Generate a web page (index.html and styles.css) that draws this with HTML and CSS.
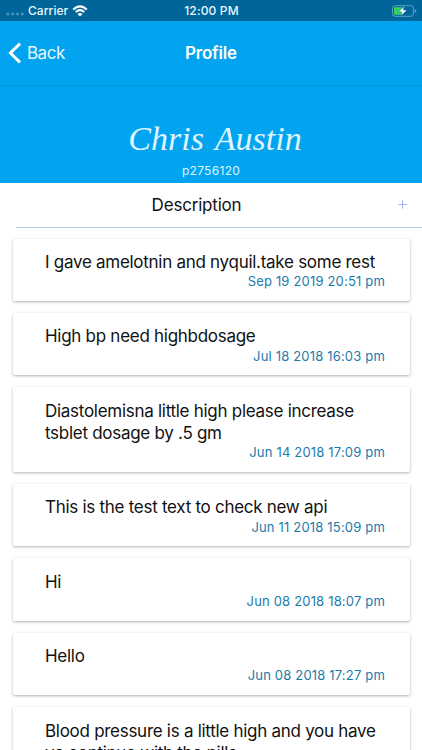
FILE: index.html
```html
<!DOCTYPE html>
<html lang="en">
<head>
  <meta charset="UTF-8">
  <meta name="viewport" content="width=device-width, initial-scale=1.0">
  <title>Profile</title>
  <link rel="stylesheet" href="styles.css">
</head>
<body>
  <!-- Status Bar -->
  <div class="status-bar">
    <div class="carrier">
      <svg class="signal" width="18" height="4" viewBox="0 0 18 4">
        <circle cx="1.9" cy="2" r="1.5"/>
        <circle cx="6.7" cy="2" r="1.5"/>
        <circle cx="11.5" cy="2" r="1.5"/>
        <circle cx="16.3" cy="2" r="1.5"/>
      </svg>
      <span class="carrier-name">Carrier</span>
      <svg class="wifi" width="16" height="12" viewBox="0 0 16 12">
        <path d="M1.2 4.4 Q8 -1.7 14.8 4.4" />
        <path d="M3.7 7.1 Q8 3.2 12.3 7.1" />
        <path class="dot" d="M5.5 8.9 Q8 7 10.5 8.9 L8 11.5 Z" />
      </svg>
    </div>
    <span class="time">12:00 PM</span>
    <svg class="battery" width="26" height="12" viewBox="0 0 26 12">
      <rect class="outline" x="1.5" y="0.7" width="21" height="10.6" rx="2.8"/>
      <path class="outline-cap" d="M23.8 4 Q25.4 4.6 25.4 6 Q25.4 7.4 23.8 8 Z"/>
      <rect class="level" x="3" y="2.2" width="8.2" height="7.6" rx="1"/>
      <path class="bolt" d="M13.4 1 L7.4 6.9 H10.9 L9.8 11 L16 5.1 H12.4 Z"/>
    </svg>
  </div>

  <!-- Navigation Bar -->
  <nav class="navbar">
    <a class="back" href="#">
      <svg width="14" height="22" viewBox="0 0 14 22">
        <path d="M12 1.6 L2.4 11 L12 20.4"/>
      </svg>
      <span>Back</span>
    </a>
    <h1>Profile</h1>
  </nav>

  <!-- Patient -->
  <div class="patient">
    <div class="patient-name">Chris Austin</div>
    <div class="patient-id">p2756120</div>
  </div>

  <!-- Description -->
  <div class="section-header">
    <h2>Description</h2>
    <a class="add" href="#">
      <svg width="9" height="9" viewBox="0 0 9 9"><path d="M4.5 0.3 V8.7 M0.3 4.5 H8.7"/></svg>
    </a>
  </div>

  <div class="notes">
    <div class="card">
      <p>I gave amelotnin and nyquil.take some rest</p>
      <span class="date">Sep 19 2019 20:51 pm</span>
    </div>
    <div class="card">
      <p>High bp need highbdosage</p>
      <span class="date">Jul 18 2018 16:03 pm</span>
    </div>
    <div class="card">
      <p>Diastolemisna little high please increase<br>tsblet dosage by .5 gm</p>
      <span class="date">Jun 14 2018 17:09 pm</span>
    </div>
    <div class="card">
      <p>This is the test text to check new api</p>
      <span class="date">Jun 11 2018 15:09 pm</span>
    </div>
    <div class="card">
      <p>Hi</p>
      <span class="date">Jun 08 2018 18:07 pm</span>
    </div>
    <div class="card">
      <p>Hello</p>
      <span class="date">Jun 08 2018 17:27 pm</span>
    </div>
    <div class="card">
      <p>Blood pressure is a little high and you have<br>yo continue with the pills</p>
    </div>
  </div>
</body>
</html>
```
FILE: styles.css
```css
/* General styling */
* {
  box-sizing: border-box;
}

body {
  font-family: Inter, 'Liberation Sans', sans-serif;
  background-color: #fff;
  color: #111;
  margin: 0;
  height: 750px;
  overflow: hidden;
}

h1, h2, p {
  margin: 0;
}

/* Status bar */
.status-bar {
  display: grid;
  grid-template-columns: 1fr auto 1fr;
  align-items: center;
  height: 21px;
  padding: 0 5px 0 6px;
  background-color: #006699;
  color: #e8f6ff;
  font-size: 12px;
  font-weight: 500;
}

.carrier {
  display: flex;
  align-items: center;
}

.carrier-name {
  margin: 0 4px 0 4px;
  letter-spacing: 0.05px;
}

.time {
  letter-spacing: 0.15px;
}

.signal {
  fill: #4d94b8;
  margin-top: 7px;
}

.wifi {
  fill: none;
  stroke: #fff;
  stroke-width: 2;
}

.wifi .dot {
  fill: #fff;
  stroke: none;
}

.battery {
  justify-self: end;
}

.outline {
  fill: none;
  stroke: #66a3c2;
}

.outline-cap {
  fill: #66a3c2;
}

.level {
  fill: #34d160;
}

.bolt {
  fill: #fff;
  stroke: #006699;
  stroke-width: 0.5;
}

/* Navigation bar */
.navbar {
  display: grid;
  grid-template-columns: 1fr auto 1fr;
  align-items: center;
  height: 65px;
  padding: 0 8px;
  background-color: #02a4ef;
  border-bottom: 1px solid #0298de;
  color: #fff;
}

.navbar h1 {
  font-size: 17px;
  font-weight: 600;
  letter-spacing: -0.2px;
}

.back {
  display: flex;
  align-items: center;
  gap: 5px;
  color: #e6f7ff;
  font-size: 17px;
  letter-spacing: -0.5px;
  text-decoration: none;
}

.back svg {
  fill: none;
  stroke: #fff;
  stroke-width: 3;
}

/* Patient */
.patient {
  height: 96.5px;
  padding-top: 32px;
  background-color: #02a4ef;
  color: #dff5ff;
  text-align: center;
}

.patient-name {
  font-family: 'Snell Roundhand', 'Liberation Serif', serif;
  font-size: 34px;
  font-style: italic;
  line-height: 42px;
  word-spacing: 3px;
  margin-left: 8px;
}

.patient-id {
  font-size: 12px;
  line-height: 16px;
  margin-top: 3px;
  letter-spacing: 0.3px;
}

/* Description header */
.section-header {
  display: grid;
  grid-template-columns: 1fr auto 1fr;
  align-items: center;
  height: 45.5px;
  margin-left: 16px;
  padding-right: 45px;
  border-bottom: 1px solid #a5cfeb;
}

.section-header h2 {
  grid-column: 2;
  font-size: 17px;
  font-weight: 400;
  letter-spacing: -0.2px;
}

.add {
  justify-self: end;
  display: flex;
  margin-right: -30px;
}

.add svg {
  fill: none;
  stroke: #9fb5f5;
}

/* Notes */
.notes {
  display: flex;
  flex-direction: column;
  gap: 12.1px;
  padding: 10.6px 12.5px 0;
}

.card {
  display: flex;
  flex-direction: column;
  padding: 12.4px 24.5px 11.6px 32.5px;
  border-radius: 2px;
  background-color: #fff;
  box-shadow: 0 1px 3px rgba(0, 0, 0, 0.3);
}

.card p {
  font-size: 17px;
  line-height: 22.3px;
  letter-spacing: -0.28px;
  white-space: nowrap;
}

.date {
  align-self: flex-end;
  color: #1b7bab;
  font-size: 13px;
  line-height: 16px;
  letter-spacing: 0.18px;
}
```
